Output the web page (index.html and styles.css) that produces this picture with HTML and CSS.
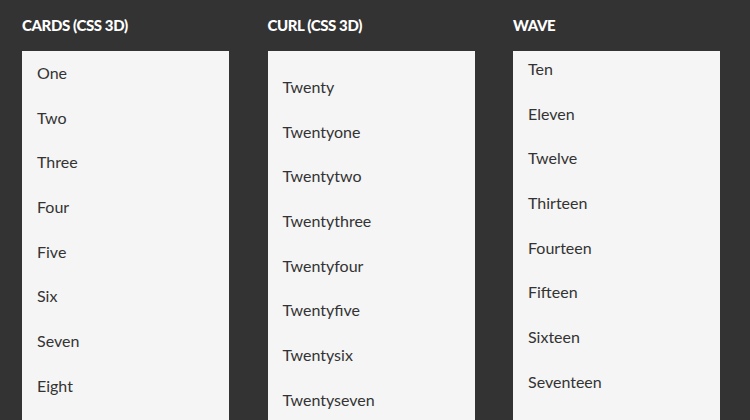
FILE: index.html
```html
<!DOCTYPE html>
<html>
<head>
<meta charset="utf-8">
<link rel="stylesheet" href="styles.css">
</head>
<body>
<div class="demos">
  <section class="demo">
    <h2 class="title">Cards (CSS 3D)</h2>
    <ul class="list list-cards">
      <li>One</li><li>Two</li><li>Three</li><li>Four</li><li>Five</li><li>Six</li><li>Seven</li><li>Eight</li>
    </ul>
  </section>
  <section class="demo">
    <h2 class="title">Curl (CSS 3D)</h2>
    <ul class="list list-curl">
      <li>Twenty</li><li>Twentyone</li><li>Twentytwo</li><li>Twentythree</li><li>Twentyfour</li><li>Twentyfive</li><li>Twentysix</li><li>Twentyseven</li>
    </ul>
  </section>
  <section class="demo">
    <h2 class="title">Wave</h2>
    <ul class="list list-wave">
      <li>Ten</li><li>Eleven</li><li>Twelve</li><li>Thirteen</li><li>Fourteen</li><li>Fifteen</li><li>Sixteen</li><li>Seventeen</li>
    </ul>
  </section>
</div>
</body>
</html>
```
FILE: styles.css
```css
html, body {
  margin: 0;
  padding: 0;
  height: 100%;
  overflow: hidden;
  background: #333333;
  font-family: Lato, "Open Sans", sans-serif;
}
.demos {
  display: flex;
  gap: 38.5px;
  padding: 0 22px;
}
.demo {
  width: 207px;
  flex: none;
}
.title {
  margin: 16px 0 0;
  height: 35px;
  font-size: 15px;
  line-height: 18px;
  font-weight: 900;
  color: #ffffff;
  text-transform: uppercase;
  letter-spacing: -0.4px;
}
.list {
  list-style: none;
  margin: 0;
  padding: 0;
  background: #f5f5f5;
  height: 380px;
}
.list li {
  height: 44.7px;
  line-height: 36.7px;
  padding-left: 15px;
  font-size: 16px;
  color: #333333;
}
.list-cards { padding-top: 4px; }
.list-curl { padding-top: 18px; }
.list-wave { padding-top: 0; }
```
